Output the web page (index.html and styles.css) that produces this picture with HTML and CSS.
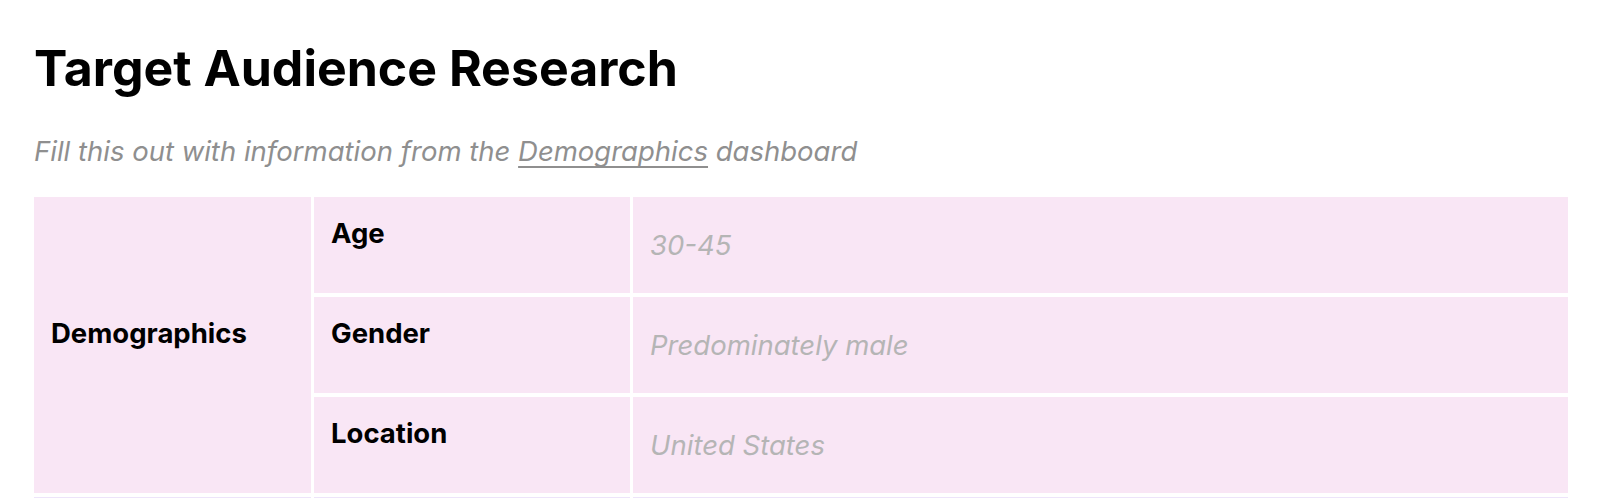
FILE: index.html
```html
<!DOCTYPE html>
<html lang="en">
<head>
<meta charset="utf-8">
<title>Target Audience Research</title>
<link rel="stylesheet" href="styles.css">
</head>
<body>
<main class="page">
  <h1 class="title">Target Audience Research</h1>
  <p class="subtitle">Fill this out with information from the <a class="link" href="#">Demographics</a> dashboard</p>
  <div class="grid">
    <div class="cell group pink">Demographics</div>
    <div class="cell label pink">Age</div>
    <div class="cell value pink">30-45</div>
    <div class="cell label pink">Gender</div>
    <div class="cell value pink">Predominately male</div>
    <div class="cell label pink">Location</div>
    <div class="cell value pink">United States</div>
    <div class="cell group lav"></div>
    <div class="cell label lav"></div>
    <div class="cell value lav"></div>
  </div>
</main>
</body>
</html>
```

FILE: styles.css
```css
html, body {
  margin: 0;
  padding: 0;
  background: #ffffff;
}
body {
  font-family: Inter, "Noto Sans", "Liberation Sans", sans-serif;
  color: #000000;
}
.page {
  padding: 0 32px 0 34px;
}
.title {
  margin: 0;
  padding-top: 38px;
  font-size: 50px;
  line-height: 60px;
  font-weight: 700;
}
.subtitle {
  margin: 35px 0 0 0;
  font-size: 27.5px;
  line-height: 36px;
  font-style: italic;
  color: #8f8f8f;
}
.link {
  color: #8f8f8f;
  text-decoration: underline;
  text-decoration-skip-ink: none;
  text-underline-offset: 5px;
  text-decoration-thickness: 1.5px;
}
.grid {
  margin-top: 28px;
  display: grid;
  grid-template-columns: 277px 316px 1fr;
  grid-auto-rows: 96px;
  gap: 4px 3px;
}
.pink { background: #f9e6f5; }
.lav { background: #ede4fa; }
.cell {
  display: flex;
  align-items: center;
  padding: 0 17px;
  font-size: 27.5px;
}
.group {
  grid-row: span 3;
  font-weight: 700;
  padding-bottom: 24px;
}
.label {
  font-weight: 700;
  padding-bottom: 24px;
}
.value {
  font-style: italic;
  color: #b5b5b5;
}
```
